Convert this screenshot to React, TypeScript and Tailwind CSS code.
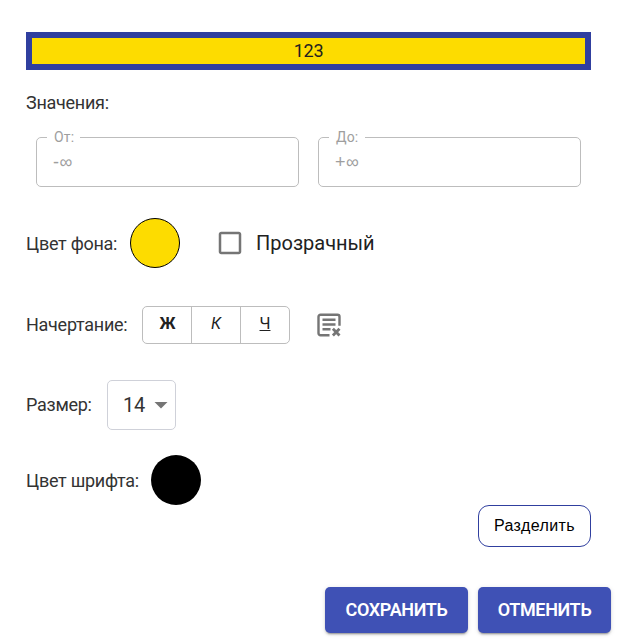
import React, { ReactNode } from 'react';

function RangeField({ label, placeholder, gap }: { label: string; placeholder: string; gap: string }) {
  return (
    <fieldset className="h-[55px] w-[263px] rounded-[5px] border border-[#bdbdbd] pl-[15px] text-[#9e9e9e]">
      <legend className={`-ml-[5px] h-[11px] whitespace-nowrap pl-[7px] text-[14px] leading-[11px] tracking-[0.15px] ${gap}`}>
        {label}
      </legend>
      <div className="mt-[8px] pl-px font-['Liberation_Sans',sans-serif] text-[18px] leading-[23px] tracking-[0.5px]">
        {placeholder}
      </div>
    </fieldset>
  );
}

function Label({ children, width }: { children: ReactNode; width: string }) {
  return (
    <span className={`shrink-0 whitespace-nowrap text-[18px] leading-[24px] tracking-[-0.27px] ${width}`}>{children}</span>
  );
}

export default function App() {
  return (
    <main className="h-[641px] w-[620px] overflow-hidden bg-white pl-[26px] pt-[32px] font-['Roboto','Liberation_Sans',sans-serif] text-[#333]">
      <div className="flex h-[38px] w-[565px] items-center justify-center border-6 border-[#303f9f] bg-[#fddc00] text-[18px] leading-none tracking-[-0.2px] text-[#212121]">
        123
      </div>

      <div className="mt-[21px] flex h-[24px] items-center">
        <Label width="w-[100px]">Значения:</Label>
      </div>
      <div className="ml-[10px] mt-[17px] flex gap-[19px]">
        <RangeField label="От:" placeholder="-∞" gap="w-[33px]" />
        <RangeField label="До:" placeholder="+∞" gap="w-[36px]" />
      </div>

      <div className="mt-[31px] flex h-[50px] items-center">
        <Label width="w-[104px] pt-[2px]">Цвет фона:</Label>
        <button className="size-[50px] rounded-full border border-black bg-[#fddc00]" />
        <svg className="ml-[35px]" width="30" height="30" viewBox="0 0 24 24" fill="#757575">
          <path d="M19 5v14H5V5h14m0-2H5c-1.1 0-2 .9-2 2v14c0 1.1.9 2 2 2h14c1.1 0 2-.9 2-2V5c0-1.1-.9-2-2-2z" />
        </svg>
        <span className="ml-[11px] text-[20px] leading-[24px] text-[#212121]">Прозрачный</span>
      </div>

      <div className="mt-[38px] flex h-[38px] items-center">
        <Label width="w-[116px]">Начертание:</Label>
        <div className="flex h-[38px] w-[148px] rounded-[5px] border border-[#bdbdbd] text-[16px] text-[#212121]">
          <button className="w-[49px] border-r border-[#bdbdbd] pb-[3px] pl-px font-bold">Ж</button>
          <button className="w-[49px] border-r border-[#bdbdbd] pb-[3px] italic">К</button>
          <button className="w-[48px] pb-[3px] underline">Ч</button>
        </div>
        <svg className="ml-[26px]" width="26" height="26" viewBox="0.5 0.3 26 26" fill="none" stroke="#757575" strokeWidth="2.4">
          <path d="M14 23.6H5a2 2 0 0 1-2-2V5a2 2 0 0 1 2-2h17a2 2 0 0 1 2 2v9" />
          <path d="M7 8h13M7 12.8h13M7 17.6h8" />
          <path d="M17.4 17l6.6 6.8M24 17l-6.6 6.8" strokeWidth="2.8" />
        </svg>
      </div>

      <div className="mt-[36px] flex h-[50px] items-center">
        <Label width="w-[81px]">Размер:</Label>
        <button className="flex h-[50px] w-[69px] items-center rounded-[5px] border border-[#cfd1d9] pl-[15px] text-[20px] tracking-[-0.2px]">
          <span className="w-[31px] text-left">14</span>
          <svg width="14" height="7" viewBox="0 0 14 7" fill="#757575">
            <path d="M.5 0h13L7 6.5z" />
          </svg>
        </button>
      </div>

      <div className="mt-[25px] flex h-[50px] items-center">
        <Label width="w-[125px] pt-[2px]">Цвет шрифта:</Label>
        <button className="size-[50px] rounded-full bg-black" />
      </div>

      <div className="flex w-[565px] justify-end">
        <button className="h-[42px] w-[113px] rounded-[11px] border border-[#303f9f] font-['Liberation_Sans',sans-serif] text-[16px] tracking-[0.4px] text-black">
          Разделить
        </button>
      </div>

      <div className="mt-[40px] flex w-[585px] justify-end gap-[10px] text-[18px] font-semibold tracking-[-0.35px] text-white">
        <button className="h-[46px] w-[143px] rounded-[5px] bg-[#3f51b5] pb-[2px] shadow-[0_3px_1px_-2px_rgba(0,0,0,0.2),0_2px_2px_0_rgba(0,0,0,0.14),0_1px_5px_0_rgba(0,0,0,0.12)]">СОХРАНИТЬ</button>
        <button className="h-[46px] w-[133px] rounded-[5px] bg-[#3f51b5] pb-[2px] shadow-[0_3px_1px_-2px_rgba(0,0,0,0.2),0_2px_2px_0_rgba(0,0,0,0.14),0_1px_5px_0_rgba(0,0,0,0.12)]">ОТМЕНИТЬ</button>
      </div>
    </main>
  );
}
